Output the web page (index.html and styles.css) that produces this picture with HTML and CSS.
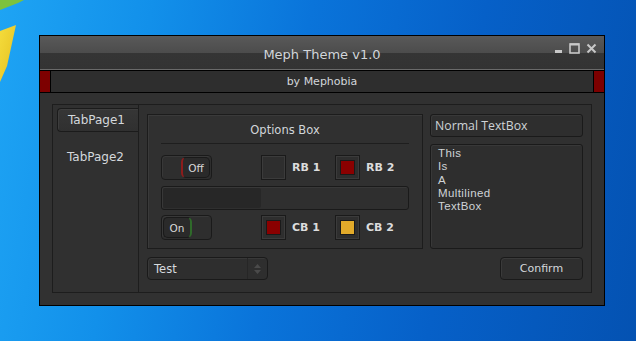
FILE: index.html
```html
<!DOCTYPE html>
<html lang="en">
<head>
    <meta charset="UTF-8">
    <meta name="viewport" content="width=device-width, initial-scale=1.0">
    <title>Meph Theme v1.0</title>
    <link rel="stylesheet" href="styles.css">
</head>
<body>

    <svg class="wallpaper-art" width="40" height="90" viewBox="0 0 40 90">
        <defs>
            <linearGradient id="yel" x1="0" y1="0" x2="1" y2="1">
                <stop offset="0" stop-color="#f4dc3c"/>
                <stop offset="1" stop-color="#e6c020"/>
            </linearGradient>
        </defs>
        <polygon points="0,0 24,0 18,3 0,10" fill="#7dc23e"/>
        <polygon points="0,31 16,25 7,66 0,82" fill="url(#yel)"/>
    </svg>

    <div class="window">
        <div class="titlebar">
            <span></span>
            <span class="title">Meph Theme v1.0</span>
            <div class="controls">
                <svg width="9" height="11" viewBox="0 0 9 11"><rect x="1" y="7" width="7" height="3" fill="#c8c8c8"/></svg>
                <svg width="11" height="11" viewBox="0 0 11 11"><rect x="1" y="1" width="9" height="9" fill="none" stroke="#c8c8c8" stroke-width="1.6"/><rect x="1" y="0.5" width="9" height="2" fill="#c8c8c8"/></svg>
                <svg width="11" height="11" viewBox="0 0 11 11"><path d="M1.5 1.5 L9.5 9.5 M9.5 1.5 L1.5 9.5" stroke="#c8c8c8" stroke-width="2"/></svg>
            </div>
        </div>

        <div class="subbar">
            <span class="mark mark-left"></span>
            <span class="subtitle">by Mephobia</span>
            <span class="mark mark-right"></span>
        </div>

        <div class="client">
            <div class="tabs">
                <div class="tablist">
                    <div class="tab active">TabPage1</div>
                    <div class="tab">TabPage2</div>
                </div>

                <div class="tabpage">
                    <div class="col-left">
                        <div class="groupbox">
                            <div class="group-title">Options Box</div>

                            <div class="row">
                                <div class="toggle off"><span class="knob">Off</span></div>
                                <div class="option">
                                    <span class="check"></span>
                                    <span class="label">RB 1</span>
                                </div>
                                <div class="option">
                                    <span class="check"><span class="mark-red"></span></span>
                                    <span class="label">RB 2</span>
                                </div>
                            </div>

                            <div class="progress"><div class="progress-fill" style="width: 40%;"></div></div>

                            <div class="row">
                                <div class="toggle on"><span class="knob">On</span></div>
                                <div class="option">
                                    <span class="check"><span class="mark-red"></span></span>
                                    <span class="label">CB 1</span>
                                </div>
                                <div class="option">
                                    <span class="check"><span class="mark-gold"></span></span>
                                    <span class="label">CB 2</span>
                                </div>
                            </div>
                        </div>

                        <div class="combo">
                            <span class="combo-text">Test</span>
                            <span class="combo-arrows">
                                <svg width="7" height="10" viewBox="0 0 7 10"><path d="M3.5 0 L7 4 L0 4 Z M0 6 L7 6 L3.5 10 Z" fill="#4a4a4a"/></svg>
                            </span>
                        </div>
                    </div>

                    <div class="col-right">
                        <div class="textbox">Normal TextBox</div>
                        <div class="textarea">This<br>Is<br>A<br>Multilined<br>TextBox</div>
                        <div class="button">Confirm</div>
                    </div>
                </div>
            </div>
        </div>
    </div>

</body>
</html>
```

FILE: styles.css
```css
body {
    margin: 0;
    width: 636px;
    height: 341px;
    overflow: hidden;
    font-family: "DejaVu Sans", Verdana, sans-serif;
    background: linear-gradient(100deg, #1ea4f4 0%, #1290ea 22%, #0a74da 45%, #0660c8 70%, #0452b2 100%);
    position: relative;
}

.wallpaper-art {
    position: absolute;
    left: 0;
    top: 0;
}

.window {
    position: absolute;
    left: 39px;
    top: 35px;
    width: 566px;
    height: 271px;
    box-sizing: border-box;
    border: 1px solid #000;
    background-color: #313131;
    display: flex;
    flex-direction: column;
}

/* title bar */
.titlebar {
    height: 33px;
    display: grid;
    grid-template-columns: 1fr auto 1fr;
    align-items: center;
    background: linear-gradient(#595959, #4c4c4c 17px, #353535 17px, #333 33px);
    border-bottom: 1px solid #6a6a6a;
}

.title {
    color: #d2d6da;
    font-size: 13px;
    padding-top: 3px;
}

.controls {
    justify-self: end;
    display: flex;
    gap: 6px;
    padding-right: 7px;
    padding-bottom: 9px;
}

.controls svg {
    display: block;
}

.subbar {
    height: 21px;
    border-top: 1px solid #000;
    border-bottom: 1px solid #000;
    background-color: #2e2e2e;
    display: flex;
    align-items: center;
}

.mark {
    width: 10px;
    height: 21px;
    background-color: #7d0000;
}

.mark-left {
    border-right: 1px solid #000;
}

.mark-right {
    border-left: 1px solid #000;
}

.subtitle {
    flex: 1;
    text-align: center;
    color: #d2d6da;
    font-size: 11px;
}

/* client */
.client {
    flex: 1;
    padding: 11px 12px 12px 12px;
    display: flex;
}

.tabs {
    flex: 1;
    display: flex;
    border: 1px solid #1d1d1d;
    background-color: #303030;
}

.tablist {
    width: 85px;
    border-right: 1px solid #1d1d1d;
    padding-top: 3px;
    display: flex;
    flex-direction: column;
    gap: 13px;
}

.tab {
    height: 24px;
    margin-left: 4px;
    padding-left: 10px;
    display: flex;
    align-items: center;
    color: #d4d8dc;
    font-size: 12px;
}

.tab.active {
    box-sizing: border-box;
    border: 1px solid #1b1b1b;
    border-right: none;
    border-radius: 4px 0 0 4px;
    background: linear-gradient(#363636, #303030);
    box-shadow: inset 1px 1px 0 #3d3d3d;
}

.tabpage {
    flex: 1;
    display: flex;
    gap: 7px;
    padding: 9px 8px 0 8px;
}

.col-left {
    width: 276px;
    display: flex;
    flex-direction: column;
    gap: 8px;
}

.col-right {
    flex: 1;
    display: flex;
    flex-direction: column;
}

/* group box */
.groupbox {
    height: 135px;
    box-sizing: border-box;
    border: 1px solid #1c1c1c;
    box-shadow: inset 1px 1px 0 #3a3a3a;
    background-color: #303030;
    padding: 0 13px;
    display: flex;
    flex-direction: column;
}

.group-title {
    height: 29px;
    box-sizing: border-box;
    border-bottom: 1px solid #1e1e1e;
    color: #d2d6da;
    font-size: 11.5px;
    text-align: center;
    padding-top: 8px;
    margin-bottom: 11px;
}

.row {
    display: flex;
    align-items: center;
    height: 25px;
}

.toggle {
    width: 51px;
    height: 25px;
    box-sizing: border-box;
    border: 1px solid #1a1a1a;
    border-radius: 4px;
    background-color: #2e2e2e;
    box-shadow: inset 1px 1px 0 #383838;
    display: flex;
    align-items: center;
    padding: 0 1px;
    margin-right: 49px;
}

.toggle.off {
    justify-content: flex-end;
}

.knob {
    width: 29px;
    height: 21px;
    box-sizing: border-box;
    border-radius: 5px;
    background-color: #2a2a2a;
    border: 1px solid #1a1a1a;
    color: #d8d8d8;
    font-size: 10.5px;
    display: flex;
    align-items: center;
    justify-content: center;
}

.toggle.off .knob {
    border-left: 2px solid #8c1c1c;
}

.toggle.on .knob {
    border-right: 2px solid #2f6a2a;
}

.option {
    display: flex;
    align-items: center;
    width: 74px;
}

.check {
    width: 25px;
    height: 25px;
    box-sizing: border-box;
    border: 1px solid #1a1a1a;
    background-color: #2e2e2e;
    box-shadow: inset 1px 1px 0 #3b3b3b, inset -1px -1px 0 #3b3b3b;
    display: flex;
    align-items: center;
    justify-content: center;
}

.mark-red,
.mark-gold {
    width: 15px;
    height: 15px;
    box-sizing: border-box;
    border: 1px solid #1a1a1a;
}

.mark-red {
    background-color: #8a0000;
}

.mark-gold {
    background-color: #e2aa2a;
}

.label {
    margin-left: 6px;
    color: #dcdcdc;
    font-size: 11px;
    font-weight: bold;
}

.progress {
    height: 24px;
    box-sizing: border-box;
    margin: 6px 0 5px 0;
    border: 1px solid #1a1a1a;
    border-radius: 3px;
    background-color: #2f2f2f;
    box-shadow: inset 1px 1px 0 #383838;
    padding: 1px;
    display: flex;
}

.progress-fill {
    background-color: #272727;
    border-radius: 2px;
}

/* combo */
.combo {
    width: 121px;
    height: 23px;
    box-sizing: border-box;
    border: 1px solid #1a1a1a;
    border-radius: 4px;
    background-color: #2e2e2e;
    box-shadow: inset 1px 1px 0 #383838;
    display: flex;
    align-items: center;
}

.combo-text {
    flex: 1;
    padding-left: 6px;
    color: #d6dade;
    font-size: 11.5px;
}

.combo-arrows {
    width: 19px;
    height: 21px;
    border-left: 1px solid #262626;
    display: flex;
    align-items: center;
    justify-content: center;
}

/* right column */
.textbox {
    height: 23px;
    box-sizing: border-box;
    border: 1px solid #1a1a1a;
    border-radius: 3px;
    background-color: #2e2e2e;
    box-shadow: inset 1px 1px 0 #383838;
    color: #cfd3d6;
    font-family: "Open Sans", sans-serif;
    font-size: 12.3px;
    display: flex;
    align-items: center;
    padding-left: 4px;
}

.textarea {
    height: 105px;
    margin-top: 7px;
    box-sizing: border-box;
    border: 1px solid #1a1a1a;
    border-radius: 3px;
    background-color: #2e2e2e;
    box-shadow: inset 1px 1px 0 #383838;
    color: #cfd3d6;
    font-family: "Liberation Sans", Arial, sans-serif;
    font-size: 11.5px;
    letter-spacing: 0.4px;
    line-height: 13.25px;
    padding: 2px 0 0 7px;
}

.button {
    align-self: flex-end;
    margin-top: 8px;
    width: 83px;
    height: 23px;
    box-sizing: border-box;
    border: 1px solid #1a1a1a;
    border-radius: 4px;
    background-color: #2e2e2e;
    box-shadow: inset 1px 1px 0 #3a3a3a;
    color: #d4d8dc;
    font-size: 11px;
    display: flex;
    align-items: center;
    justify-content: center;
}
```
